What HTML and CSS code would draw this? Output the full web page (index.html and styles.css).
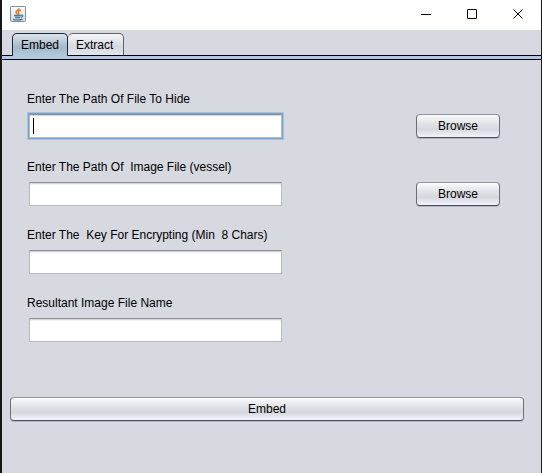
FILE: index.html
```html
<!DOCTYPE html>
<html lang="en">
<head>
<meta charset="utf-8">
<title>Embed</title>
<link rel="stylesheet" href="styles.css">
</head>
<body>
<div class="window">
  <header class="titlebar">
    <svg class="app-icon" viewBox="0 0 16 16" aria-hidden="true">
      <defs>
        <linearGradient id="tile" x1="0" y1="0" x2="0" y2="1">
          <stop offset="0" stop-color="#fdfdfd"/>
          <stop offset="1" stop-color="#cfdae3"/>
        </linearGradient>
      </defs>
      <rect x=".5" y=".5" width="15" height="15" rx="1" fill="url(#tile)" stroke="#7992a7"/>
      <path d="M9 2C9.800 4 5.600 4.700 6 6.300C6.300 7.400 7.300 7.600 7.700 8.800M11 4.200C8.800 4.800 7.800 5.600 8.600 6.600C9.200 7.400 8.800 8 8.200 8.600" fill="none" stroke="#ee7a1c" stroke-width="1.500"/>
      <path d="M4 9.500H10.800M5 11.500H10.200M11 9.300C13.600 8.800 13.200 11 10.800 11.400M3 13.300C5 14.200 10 14.200 12.600 13.100" fill="none" stroke="#4f7896" stroke-width="1.300"/>
    </svg>
    <div class="controls">
      <button class="control" type="button" aria-label="Minimize">
        <svg class="glyph" viewBox="0 0 11 11"><path d="M0 5.500H10"/></svg>
      </button>
      <button class="control" type="button" aria-label="Maximize">
        <svg class="glyph" viewBox="0 0 11 11"><path d="M.5 .5H9.500V9.500H.5Z"/></svg>
      </button>
      <button class="control" type="button" aria-label="Close">
        <svg class="glyph" viewBox="0 0 11 11"><path d="M.5 .5L9.500 9.500M9.500 .5L.5 9.500"/></svg>
      </button>
    </div>
  </header>
  <nav class="tabs" role="tablist">
    <button class="tab tab-active" type="button" role="tab" aria-selected="true">Embed</button>
    <button class="tab" type="button" role="tab" aria-selected="false">Extract</button>
  </nav>
  <div class="band"></div>
  <form class="panel">
    <div class="fields">
      <div class="field">
        <label class="label" for="hide">Enter The Path Of File To Hide</label>
        <div class="row">
          <div class="entry">
            <input class="input input-focused" id="hide" type="text">
            <span class="caret"></span>
          </div>
          <button class="button browse" type="button">Browse</button>
        </div>
      </div>
      <div class="field">
        <label class="label" for="vessel">Enter The Path Of  Image File (vessel)</label>
        <div class="row">
          <div class="entry"><input class="input" id="vessel" type="text"></div>
          <button class="button browse" type="button">Browse</button>
        </div>
      </div>
      <div class="field">
        <label class="label" for="key">Enter The  Key For Encrypting (Min  8 Chars)</label>
        <div class="row">
          <div class="entry"><input class="input" id="key" type="text"></div>
        </div>
      </div>
      <div class="field">
        <label class="label" for="result">Resultant Image File Name</label>
        <div class="row">
          <div class="entry"><input class="input" id="result" type="text"></div>
        </div>
      </div>
    </div>
    <button class="button" type="button">Embed</button>
  </form>
</div>
</body>
</html>
```
FILE: styles.css
```css
* {
  box-sizing: border-box;
}

body {
  margin: 0;
  font: 12px/16px "Liberation Sans", Arial, sans-serif;
  color: #000;
}

button,
input {
  margin: 0;
  font: inherit;
  color: inherit;
}

.window {
  display: flex;
  flex-direction: column;
  min-height: 100vh;
  background: #d6d9e0;
  border-left: 2px solid #17171a;
  border-right: 1px solid #17171a;
}

.titlebar {
  display: flex;
  align-items: center;
  justify-content: space-between;
  height: 30px;
  padding: 0 0 2px 8px;
  background: #fff;
}

.app-icon {
  width: 16px;
  height: 16px;
}

.controls {
  display: flex;
}

.control {
  display: flex;
  align-items: center;
  justify-content: center;
  width: 46px;
  height: 28px;
  padding: 0;
  border: 0;
  background: none;
}

.glyph {
  width: 11px;
  height: 11px;
  fill: none;
  stroke: #000;
}

.tabs {
  display: flex;
  height: 26px;
  padding: 3px 10px 0;
  border-bottom: 1px solid #00001a;
}

.tab {
  height: 22px;
  padding: 0 10px 0 8px;
  border: 1px solid #60646e;
  border-bottom: 0;
  border-left: 0;
  border-radius: 5px 5px 0 0;
  background: linear-gradient(#f6f7f9, #d6d9e0 60%, #e3e6ec);
}

.tab-active {
  height: 23px;
  padding: 0 8px;
  border: 1px solid #1c2840;
  border-bottom: 0;
  background: linear-gradient(#dce4eb, #a3b9ca 60%, #b3cadb);
}

.band {
  height: 4px;
  background: #b5cbdd;
  border-bottom: 1px solid #00001a;
}

.panel {
  display: flex;
  flex-direction: column;
  padding: 31px 17px 51px 8px;
}

.fields {
  display: flex;
  flex-direction: column;
  gap: 21px;
  padding: 0 24px 55px 17px;
}

.field {
  display: flex;
  flex-direction: column;
  gap: 7px;
}

.label {
  align-self: flex-start;
  white-space: pre;
}

.row {
  display: flex;
  align-items: center;
  justify-content: space-between;
  gap: 16px;
}

.row .entry {
  position: relative;
  flex: 0 1 253px;
  margin-left: 2px;
}

.input {
  display: block;
  width: 100%;
  height: 24px;
  padding: 0 4px;
  border: 1px solid #b9bbc1;
  border-top-color: #8d8e92;
  border-radius: 0;
  outline: 0;
  background: #fff;
  box-shadow: inset 0 1px #d5d6d9, inset 0 2px #f2f2f3;
}

.input-focused {
  caret-color: transparent;
  box-shadow: 0 0 0 1px #73a4d1, 0 0 0 2px #a9c3dd, inset 0 1px #d5d6d9;
}

.caret {
  position: absolute;
  top: 4px;
  left: 4px;
  width: 1px;
  height: 16px;
  background: #000;
}

.button {
  height: 24px;
  padding: 0 8px;
  border: 1px solid #6b6e76;
  border-top-color: #94969d;
  border-bottom-color: #4c4f57;
  border-radius: 4px;
  background: linear-gradient(#fbfbfc, #e3e5e8 35%, #d5d8df 65%, #f1f4fb);
  box-shadow: 0 1px #b4b7be;
}

.browse {
  width: 84px;
}
```
